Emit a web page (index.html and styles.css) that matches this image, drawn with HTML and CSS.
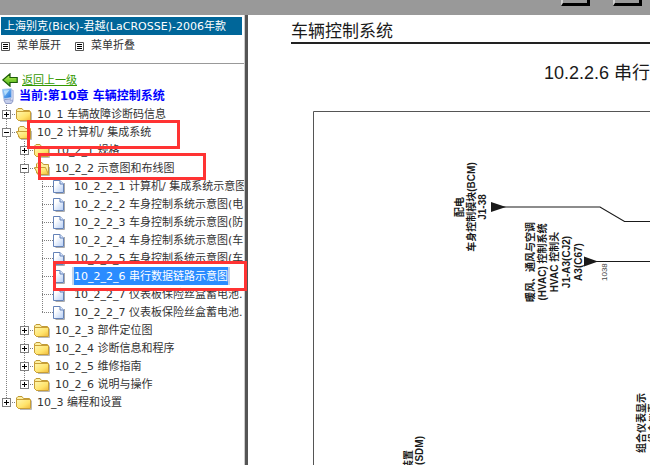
FILE: index.html
```html
<!DOCTYPE html>
<html lang="zh-CN">
<head>
    <meta charset="UTF-8">
    <meta name="viewport" content="width=device-width, initial-scale=1.0">
    <title>车辆控制系统</title>
    <link rel="stylesheet" href="styles.css">
</head>
<body>
    <!-- Shared icons -->
    <svg class="icon-defs" aria-hidden="true">
        <defs>
            <linearGradient id="gold" x1="0" y1="0" x2="1" y2="1">
                <stop offset="0" stop-color="#fff7b0"/>
                <stop offset="0.6" stop-color="#ffe36a"/>
                <stop offset="1" stop-color="#f0b93c"/>
            </linearGradient>
            <linearGradient id="paper" x1="0" y1="0" x2="1" y2="1">
                <stop offset="0.3" stop-color="#ffffff"/>
                <stop offset="1" stop-color="#b4cdf5"/>
            </linearGradient>
            <linearGradient id="leaf" x1="0" y1="0" x2="0" y2="1">
                <stop offset="0" stop-color="#c4f25a"/>
                <stop offset="1" stop-color="#3fae12"/>
            </linearGradient>
            <linearGradient id="screen" x1="0" y1="0" x2="1" y2="1">
                <stop offset="0" stop-color="#8fd0ff"/>
                <stop offset="1" stop-color="#1d6fd6"/>
            </linearGradient>
        </defs>
        <symbol id="folder" viewBox="0 0 18 18">
            <path d="M4 16.5h11.500v-9" fill="none" stroke="#b9b9b9"/>
            <path d="M.5 13.500V5L2 3.500h4L7.500 5.500h6V15.500H2.500z" fill="#fdf0a0" stroke="#c09a35"/>
            <path d="M.5 6.500h14v9h-12l-2-2z" fill="url(#gold)" stroke="#c99f36"/>
        </symbol>
        <symbol id="folder-open" viewBox="0 0 18 18">
            <path d="M5 16.500h10.500V8" fill="none" stroke="#b9b9b9"/>
            <path d="M2.500 14V5L4 3.500h4L9.500 5.500h5V15.500H4.500z" fill="#fdf0a0" stroke="#c09a35"/>
            <path d="M.5 8.500h11l3 7H4z" fill="url(#gold)" stroke="#c99f36"/>
        </symbol>
        <symbol id="page" viewBox="0 0 18 18">
            <path d="M2.500 16.500h9V6" fill="none" stroke="#aaa"/>
            <path d="M.5 3.500h6.500l3.500 3.500v8.500h-10z" fill="url(#paper)" stroke="#6482b8"/>
            <path d="M7 3.500V7h3.500" fill="#dbe8ff" stroke="#6482b8"/>
        </symbol>
        <symbol id="list" viewBox="0 0 9 9">
            <path d="M.5 .5h8v8h-8z" fill="#fff" stroke="#555"/>
            <path d="M2 2.500h5M2 4.500h5M2 6.500h5" stroke="#000"/>
        </symbol>
    </svg>

    <div class="topbar">
        <button class="tool" aria-label="后退"></button>
        <button class="tool" aria-label="前进"></button>
    </div>

    <div class="frames">
        <nav class="sidebar">
            <h1 class="car">上海别克(Bick)-君越(LaCROSSE)-2006年款</h1>
            <div class="menu">
                <button class="menu-btn"><svg class="list-icon"><use href="#list"/></svg>菜单展开</button>
                <button class="menu-btn"><svg class="list-icon"><use href="#list"/></svg>菜单折叠</button>
            </div>

            <div class="back">
                <svg class="back-icon" viewBox="0 0 16 14">
                    <path d="M.8 7L8 .8V4.500h7.200v5H8v3.700z" fill="url(#leaf)" stroke="#1c5c08" stroke-width="1.200"/>
                </svg>
                <a href="#">返回上一级</a>
            </div>
            <div class="current">
                <svg class="pc-icon" viewBox="0 0 16 18">
                    <path d="M3 13l7-1 3 2-2 3H5z" fill="#c3cdea" stroke="#8c97c4"/>
                    <path d="M10 2l3 1v10l-3 1z" fill="#d5dcf2" stroke="#8c9ac8" stroke-width=".7"/>
                    <path d="M1.500 2l9.500-.8v9.500L3 12z" fill="url(#screen)" stroke="#a9c4ee"/>
                    <path d="M3 3l6-.5L4 9z" fill="#d8f1ff" opacity=".7"/>
                </svg>
                <span>当前:第10章 车辆控制系统</span>
            </div>

            <ul class="tree">
                <li>
                    <div class="row"><button class="toggle plus" aria-label="展开"></button><svg class="icon"><use href="#folder"/></svg><a href="#">10_1 车辆故障诊断码信息</a></div>
                </li>
                <li>
                    <div class="row"><button class="toggle" aria-label="折叠"></button><svg class="icon"><use href="#folder-open"/></svg><a href="#">10_2 计算机/ 集成系统</a></div>
                    <ul>
                        <li>
                            <div class="row"><button class="toggle plus" aria-label="展开"></button><svg class="icon"><use href="#folder"/></svg><a href="#">10_2_1 规格</a></div>
                        </li>
                        <li>
                            <div class="row"><button class="toggle" aria-label="折叠"></button><svg class="icon"><use href="#folder-open"/></svg><a href="#">10_2_2 示意图和布线图</a></div>
                            <ul>
                                <li><div class="row"><svg class="icon"><use href="#page"/></svg><a href="#">10_2_2_1 计算机/ 集成系统示意图</a></div></li>
                                <li><div class="row"><svg class="icon"><use href="#page"/></svg><a href="#">10_2_2_2 车身控制系统示意图(电</a></div></li>
                                <li><div class="row"><svg class="icon"><use href="#page"/></svg><a href="#">10_2_2_3 车身控制系统示意图(防</a></div></li>
                                <li><div class="row"><svg class="icon"><use href="#page"/></svg><a href="#">10_2_2_4 车身控制系统示意图(车</a></div></li>
                                <li><div class="row"><svg class="icon"><use href="#page"/></svg><a href="#">10_2_2_5 车身控制系统示意图(车</a></div></li>
                                <li><div class="row"><svg class="icon"><use href="#page"/></svg><a href="#" class="selected">10_2_2_6 串行数据链路示意图</a></div></li>
                                <li><div class="row"><svg class="icon"><use href="#page"/></svg><a href="#">10_2_2_7 仪表板保险丝盒蓄电池.</a></div></li>
                                <li><div class="row"><svg class="icon"><use href="#page"/></svg><a href="#">10_2_2_7 仪表板保险丝盒蓄电池.</a></div></li>
                            </ul>
                        </li>
                        <li>
                            <div class="row"><button class="toggle plus" aria-label="展开"></button><svg class="icon"><use href="#folder"/></svg><a href="#">10_2_3 部件定位图</a></div>
                        </li>
                        <li>
                            <div class="row"><button class="toggle plus" aria-label="展开"></button><svg class="icon"><use href="#folder"/></svg><a href="#">10_2_4 诊断信息和程序</a></div>
                        </li>
                        <li>
                            <div class="row"><button class="toggle plus" aria-label="展开"></button><svg class="icon"><use href="#folder"/></svg><a href="#">10_2_5 维修指南</a></div>
                        </li>
                        <li>
                            <div class="row"><button class="toggle plus" aria-label="展开"></button><svg class="icon"><use href="#folder"/></svg><a href="#">10_2_6 说明与操作</a></div>
                        </li>
                    </ul>
                </li>
                <li>
                    <div class="row"><button class="toggle plus" aria-label="展开"></button><svg class="icon"><use href="#folder"/></svg><a href="#">10_3 编程和设置</a></div>
                </li>
            </ul>
        </nav>

        <main class="content">
            <h2 class="chapter">车辆控制系统</h2>
            <h3 class="section">10.2.2.6 串行</h3>
            <!-- Wiring diagram -->
            <svg class="diagram" width="337" height="355">
                <path d="M.5 355V.5H337" fill="none" stroke="#555"/>
                <path d="M190 96H287L311.500 110.500H337M282 150.500H337" fill="none" stroke="#1a1a1a" stroke-width="1.200"/>
                <path d="M178 91v10l15-5zM271 145.500v10l14-5z" fill="#1a1a1a"/>
                <g class="labels">
                    <text transform="translate(150 96) rotate(-90)">配电</text>
                    <text transform="translate(162 96) rotate(-90)">车身控制模块(BCM)</text>
                    <text transform="translate(173 96) rotate(-90)">J1-38</text>
                    <text transform="translate(221 151) rotate(-90)">暖风、通风与空调</text>
                    <text transform="translate(233 151) rotate(-90)">(HVAC) 控制系统</text>
                    <text transform="translate(245 151) rotate(-90)">HVAC 控制头</text>
                    <text transform="translate(257 151) rotate(-90)">J1-A3(CJ2)</text>
                    <text transform="translate(269 151) rotate(-90)">A3(C67)</text>
                    <text transform="translate(332 312) rotate(-90)">组合仪表显示</text>
                    <text transform="translate(344 312) rotate(-90)">组合仪表</text>
                </g>
                <g class="labels cut">
                    <text transform="translate(99 339) rotate(-90)">装置</text>
                    <text transform="translate(110 325) rotate(-90)">块(SDM)</text>
                </g>
                <text class="wire" transform="translate(294 170) rotate(-90)">1038</text>
            </svg>
        </main>
    </div>

    <!-- Red highlight boxes -->
    <div class="mark mark-system"></div>
    <div class="mark mark-diagrams"></div>
    <div class="mark mark-bus"></div>
</body>
</html>
```
FILE: styles.css
```css
* {
    margin: 0;
    padding: 0;
    box-sizing: border-box;
}

body {
    display: flex;
    flex-direction: column;
    height: 100vh;
    overflow: hidden;
    position: relative;
    background: #fff;
    color: #333;
    font-family: "DejaVu Sans", "Noto Sans CJK SC", sans-serif;
    font-size: 11px;
    line-height: 18px;
}

button {
    border: none;
    background: none;
    font: inherit;
    color: inherit;
    cursor: pointer;
}

a {
    color: inherit;
    text-decoration: none;
}

.icon-defs {
    position: absolute;
    width: 0;
    height: 0;
}

/* Top bar */
.topbar {
    display: flex;
    flex: none;
    justify-content: flex-end;
    gap: 23px;
    height: 15px;
    padding-right: 8px;
    background: #999;
}

.tool {
    width: 29px;
    height: 6px;
    background: #999;
    border: solid #000;
    border-width: 0 3px 3px 2px;
    border-left-color: #ccc;
}

/* Frames */
.frames {
    display: flex;
    flex: 1;
    min-height: 0;
}

.sidebar {
    flex: none;
    width: 245px;
    overflow: hidden;
    white-space: nowrap;
    padding-top: 2px;
    border-right: 1px solid #ccc;
}

.car {
    height: 18px;
    margin: 0 2px 0 1px;
    padding-left: 3px;
    background: #069;
    color: #fff;
    font-size: 11px;
    font-weight: normal;
    line-height: 19px;
}

.menu {
    display: flex;
    gap: 14px;
    height: 29px;
    padding: 2px 0 0 1px;
    border-bottom: 1px solid #999;
}

.menu-btn {
    display: flex;
    align-items: center;
    gap: 7px;
    height: 18px;
    line-height: 20px;
}

.list-icon {
    width: 9px;
    height: 9px;
}

.back,
.current {
    display: flex;
    align-items: center;
    gap: 4px;
    height: 16px;
    padding-left: 2px;
}

.back {
    margin-top: 8px;
    color: #390;
}

.back a {
    height: 16px;
    text-decoration: underline;
}

.back-icon {
    width: 16px;
    height: 14px;
}

.current {
    gap: 3px;
    padding-left: 1px;
    color: #00f;
    font-size: 12px;
    font-weight: bold;
}

.pc-icon {
    width: 15px;
    height: 18px;
}

/* Tree */
.tree {
    padding-top: 1px;
}

.tree ul {
    padding-left: 18px;
}

.tree li {
    list-style: none;
    background: repeating-linear-gradient(#808080 0 1px, transparent 1px 2px) 6px 0 / 1px 100% no-repeat;
}

.tree li:last-child {
    background-size: 1px 9px;
}

.row {
    display: flex;
    align-items: center;
    height: 18px;
    padding-left: 17px;
    background: repeating-linear-gradient(90deg, #808080 0 1px, transparent 1px 2px) 6px 9px / 11px 1px no-repeat;
}

.row:has(.toggle) {
    padding-left: 2px;
}

.row a {
    height: 18px;
    line-height: 20px;
}

.toggle {
    flex: none;
    width: 9px;
    height: 9px;
    margin-right: 5px;
    border: 1px solid #808080;
    background: linear-gradient(#000, #000) 1px 3px / 5px 1px no-repeat #fff;
}

.plus {
    background: linear-gradient(#000, #000) 1px 3px / 5px 1px no-repeat,
        linear-gradient(#000, #000) 3px 1px / 1px 5px no-repeat #fff;
}

.icon {
    flex: none;
    width: 18px;
    height: 18px;
    margin-right: 3px;
}

.selected {
    background: #2a8cff;
    color: #fff;
    box-shadow: -2px 0 #c5d5ea, 2px 0 #c5d5ea;
}

/* Document */
.content {
    flex: 1;
    min-width: 0;
    overflow: hidden;
    padding-left: 43px;
    border-left: 3px solid #000;
    border-image: linear-gradient(90deg, #555 66%, #000 66%) 0 0 0 3;
    color: #1a1a1a;
    font-family: "Liberation Sans", "Noto Sans CJK SC", sans-serif;
}

.chapter {
    height: 29px;
    padding-top: 5px;
    border-bottom: 2px solid #222;
    font-size: 17px;
    font-weight: normal;
    line-height: 24px;
}

.section {
    padding-top: 17px;
    font-size: 18px;
    font-weight: normal;
    line-height: 24px;
    text-align: right;
    white-space: nowrap;
}

.diagram {
    display: block;
    margin: 26px 0 0 22px;
}

.labels {
    fill: #1a1a1a;
    font-size: 10px;
    font-weight: bold;
    text-anchor: middle;
}

.wire {
    fill: #444;
    font-size: 8px;
}

.cut {
    text-anchor: end;
}

/* Highlights */
.mark {
    position: absolute;
    border: 3px solid #f33;
}

.mark-system {
    left: 27px;
    top: 120px;
    width: 153px;
    height: 29px;
}

.mark-diagrams {
    left: 38px;
    top: 153px;
    width: 168px;
    height: 27px;
}

.mark-bus {
    left: 53px;
    top: 261px;
    width: 194px;
    height: 30px;
}
```
